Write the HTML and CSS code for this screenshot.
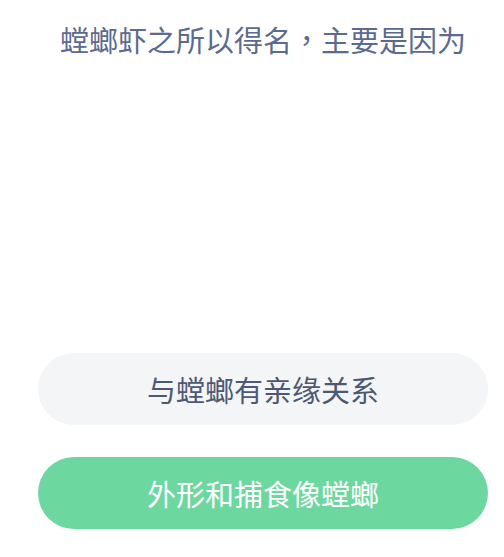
FILE: index.html
```html
<!DOCTYPE html>
<html lang="zh-CN">
<head>
    <meta charset="UTF-8">
    <meta name="viewport" content="width=device-width, initial-scale=1.0">
    <title>螳螂虾</title>
    <link rel="stylesheet" href="styles.css">
</head>
<body>

    <div class="quiz">
        <!-- 题目 -->
        <div class="question">螳螂虾之所以得名<span class="comma" lang="zh-TW">，</span>主要是因为</div>

        <div class="picture"></div>

        <!-- 选项 -->
        <div class="options">
            <button class="option">与螳螂有亲缘关系</button>
            <button class="option correct">外形和捕食像螳螂</button>
        </div>
    </div>

</body>
</html>
```

FILE: styles.css
```css
body {
    margin: 0;
    background-color: #fff;
    font-family: 'Noto Sans CJK SC', 'Noto Sans', sans-serif;
}

.quiz {
    padding: 19px 16px 0 38px;
}

.question {
    text-align: center;
    font-size: 29px;
    line-height: 40px;
    color: #5b6a8f;
}

/* 逗号居中显示 */
.question .comma {
    font-family: 'Noto Sans CJK TC', sans-serif;
}

.picture {
    height: 294px;
}

.options {
    display: flex;
    flex-direction: column;
    gap: 32px;
}

.option {
    height: 72px;
    border: none;
    border-radius: 36px;
    background-color: #f4f5f7;
    color: #4d5873;
    font-family: inherit;
    font-size: 29px;
    padding: 0;
}

.option.correct {
    background-color: #6dd7a0;
    color: #fff;
}
```
